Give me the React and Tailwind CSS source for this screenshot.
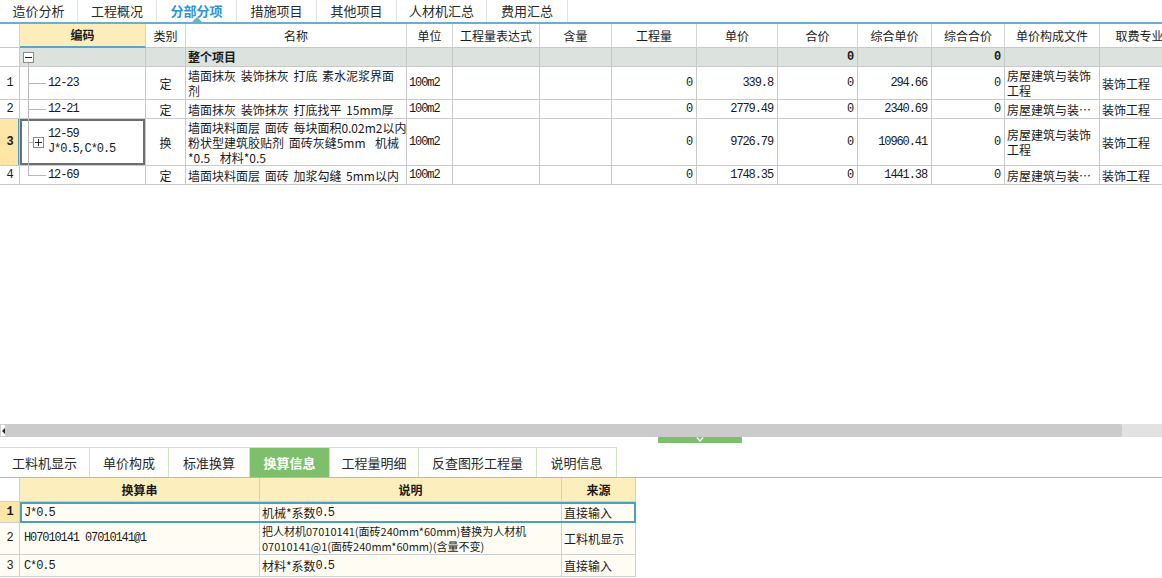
const topTabs = [
  ["造价分析", 78],
  ["工程概况", 79],
  ["分部分项", 80],
  ["措施项目", 80],
  ["其他项目", 80],
  ["人材机汇总", 90],
  ["费用汇总", 81],
];

const bottomTabs = [
  ["工料机显示", 90],
  ["单价构成", 79],
  ["标准换算", 81],
  ["换算信息", 80],
  ["工程量明细", 89],
  ["反查图形工程量", 118],
  ["说明信息", 80],
];

const W = [20, 126, 40, 221, 46, 87, 72, 85, 81, 80, 74, 73, 95, 80];
const heads = ["", "编码", "类别", "名称", "单位", "工程量表达式", "含量", "工程量", "单价", "合价", "综合单价", "综合合价", "单价构成文件", "取费专业"];

const mono = "font-['Liberation_Mono'] text-[12px] tracking-[-1.1px]";
const line = "border-r border-b border-[#c9c9c9]";

const rows = [
  {
    n: "1", code: "12-23", type: "定",
    name: ["墙面抹灰 装饰抹灰 打底 素水泥浆界面", "剂"],
    price: "339.8", cprice: "294.66",
    file: ["房屋建筑与装饰", "工程"], h: "h-[33px]",
  },
  {
    n: "2", code: "12-21", type: "定",
    name: ["墙面抹灰 装饰抹灰 打底找平 15mm厚"],
    price: "2779.49", cprice: "2340.69",
    file: ["房屋建筑与装…"], h: "h-[19px]",
  },
  {
    n: "3", code: "12-59", sub: "J*0.5,C*0.5", type: "换",
    name: ["墙面块料面层 面砖 每块面积0.02m2以内", "粉状型建筑胶贴剂 面砖灰缝5mm  机械", "*0.5  材料*0.5"],
    price: "9726.79", cprice: "10960.41",
    file: ["房屋建筑与装饰", "工程"], h: "h-[47px]", sel: true,
  },
  {
    n: "4", code: "12-69", type: "定",
    name: ["墙面块料面层 面砖 加浆勾缝 5mm以内"],
    price: "1748.35", cprice: "1441.38",
    file: ["房屋建筑与装…"], h: "h-[19px]", last: true,
  },
];

function Box({ plus }) {
  return (
    <div className="w-[11px] h-[11px] border border-[#8a8a8a] bg-white flex items-center justify-center relative">
      <div className="w-[7px] h-px bg-[#222]" />
      {plus && <div className="absolute w-px h-[7px] bg-[#222]" />}
    </div>
  );
}

function Num({ w, children, bold }) {
  return (
    <div className={`${line} shrink-0 flex items-center justify-end pr-[4px] ${mono} ${bold ? "font-bold" : ""}`} style={{ width: w }}>
      {children}
    </div>
  );
}

function Blank({ w }) {
  return <div className={`${line} shrink-0`} style={{ width: w }} />;
}

function DataRow({ r }) {
  return (
    <div className={`flex ${r.h} leading-[15px]`}>
      <div className={`${line} shrink-0 flex items-center justify-center ${mono} ${r.sel ? "bg-[#fde6a6] font-bold shadow-[inset_-1px_0_0_#4a9fc6]" : ""}`} style={{ width: W[0] }}>
        {r.n}
      </div>
      <div className={`${line} shrink-0 relative flex items-center pl-[28px] ${r.sel ? "shadow-[inset_0_0_0_2px_#6e6e6e]" : ""}`} style={{ width: W[1] }}>
        <div className={`absolute left-[8px] top-0 w-px bg-[#b8b8b8] ${r.last ? "h-1/2" : "bottom-0"}`} />
        {r.sub ? (
          <>
            <div className="absolute left-[8px] top-1/2 w-[5px] h-px bg-[#b8b8b8]" />
            <div className="absolute left-[13px] top-[18px]"><Box plus /></div>
          </>
        ) : (
          <div className="absolute left-[8px] top-1/2 w-[18px] h-px bg-[#b8b8b8]" />
        )}
        <div className={mono}>
          <div>{r.code}</div>
          {r.sub && <div>{r.sub}</div>}
        </div>
      </div>
      <div className={`${line} shrink-0 flex items-center justify-center`} style={{ width: W[2] }}>{r.type}</div>
      <div className={`${line} shrink-0 flex flex-col justify-center pl-[2px] whitespace-pre [word-spacing:2px] overflow-hidden`} style={{ width: W[3] }}>
        {r.name.map((t, i) => <div key={i}>{t}</div>)}
      </div>
      <div className={`${line} shrink-0 flex items-center pl-[2px] ${mono}`} style={{ width: W[4] }}>100m2</div>
      <Blank w={W[5]} />
      <Blank w={W[6]} />
      <Num w={W[7]}>0</Num>
      <Num w={W[8]}>{r.price}</Num>
      <Num w={W[9]}>0</Num>
      <Num w={W[10]}>{r.cprice}</Num>
      <Num w={W[11]}>0</Num>
      <div className={`${line} shrink-0 flex flex-col justify-center pl-[2px] whitespace-nowrap`} style={{ width: W[12] }}>
        {r.file.map((t, i) => <div key={i}>{t}</div>)}
      </div>
      <div className={`${line} shrink-0 flex items-center pl-[2px]`} style={{ width: W[13] }}>装饰工程</div>
    </div>
  );
}

export default function App() {
  return (
    <div className="w-[1162px] h-[578px] overflow-hidden bg-white flex flex-col text-[12px] text-[#1a1a1a] font-['Noto_Sans_CJK_SC',sans-serif]">
      {/* top tabs */}
      <div className="flex h-[22px] shrink-0 text-[13px]">
        {topTabs.map(([t, w], i) => (
          <div key={t} className={`relative flex items-center justify-center border-r border-[#e2e2e2] ${i === 2 ? "text-[#2f95d6] font-bold" : "text-[#2a2a2a]"}`} style={{ width: w }}>
            {t}
            {i === 2 && (
              <div className="absolute bottom-0 left-1/2 -ml-[5px] w-0 h-0 border-x-[5px] border-x-transparent border-b-[5px] border-b-[#6ab0cc]" />
            )}
          </div>
        ))}
      </div>
      <div className="h-[2px] shrink-0 bg-[#6ab0cc]" />

      {/* main grid */}
      <div className="h-[400px] shrink-0 overflow-hidden">
        <div className="w-[1180px]">
          <div className="flex h-[24px]">
            {heads.map((h, i) => (
              <div
                key={i}
                className={`shrink-0 flex items-center justify-center border-r border-[#d4d4d4] ${i === 1 ? "bg-[#fdedbb] font-bold border-b-2 border-b-[#5aa5c5]" : "border-b border-b-[#c9c9c9]"}`}
                style={{ width: W[i] }}
              >
                {h}
              </div>
            ))}
          </div>
          <div className="flex h-[19px]">
            <div className={`${line} shrink-0`} style={{ width: W[0] }} />
            <div className={`${line} shrink-0 relative flex items-center pl-[3px] bg-[#dce3df]`} style={{ width: W[1] }}>
              <Box />
              <div className="absolute left-[8px] top-[15px] bottom-0 w-px bg-[#b8b8b8]" />
            </div>
            <div className={`${line} shrink-0 bg-[#dce3df]`} style={{ width: W[2] }} />
            <div className={`${line} shrink-0 bg-[#dce3df] flex items-center pl-[2px] font-bold`} style={{ width: W[3] }}>整个项目</div>
            {W.slice(4).map((w, j) => {
              const i = j + 4;
              const zero = i === 9 || i === 11;
              return (
                <div key={i} className={`${line} shrink-0 bg-[#dce3df] flex items-center justify-end pr-[4px] ${mono} font-bold`} style={{ width: w }}>
                  {zero ? "0" : ""}
                </div>
              );
            })}
          </div>
          {rows.map((r) => <DataRow key={r.n} r={r} />)}
        </div>
      </div>

      {/* horizontal scrollbar */}
      <div className="flex h-[13px] shrink-0 bg-[#e2e2e2]">
        <div className="w-[6px] bg-white border border-[#cfcfcf] flex items-center justify-center">
          <div className="w-0 h-0 border-y-[3px] border-y-transparent border-r-[3px] border-r-[#222]" />
        </div>
        <div className="w-[1116px] bg-[#cbcbcb] rounded-r-[2px]" />
      </div>

      {/* splitter */}
      <div className="flex h-[6px] shrink-0">
        <div className="ml-[658px] w-[84px] bg-[#7dc06c] flex items-start justify-center">
          <svg width="8" height="5" viewBox="0 0 8 5">
            <polyline points="1,0.5 4,4 7,0.5" fill="none" stroke="white" strokeWidth="1.4" />
          </svg>
        </div>
      </div>
      <div className="h-[4px] shrink-0" />

      {/* bottom tabs */}
      <div className="flex h-[30px] shrink-0 text-[13px]">
        <div className="flex border-t border-[#cde6c2]">
          {bottomTabs.map(([t, w], i) => (
            <div
              key={t}
              className={`flex items-center justify-center border-r border-[#cde6c2] ${i === 3 ? "bg-[#7dbf6b] text-white font-bold" : "text-[#2a2a2a]"}`}
              style={{ width: w }}
            >
              {t}
            </div>
          ))}
        </div>
      </div>
      <div className="h-px shrink-0 bg-[#9ccf8a]" />

      {/* bottom table */}
      <div className="w-[636px] flex flex-col">
        <div className="flex h-[24px] font-bold">
          <div className="w-[20px] shrink-0 border-r border-b border-[#d0d0d0] bg-white" />
          <div className="w-[240px] shrink-0 border-r border-b border-[#d0d0d0] bg-[#fdeebe] flex items-center justify-center">换算串</div>
          <div className="w-[302px] shrink-0 border-r border-b border-[#d0d0d0] bg-[#fdeebe] flex items-center justify-center">说明</div>
          <div className="w-[74px] shrink-0 border-r border-b border-[#d0d0d0] bg-[#fdeebe] flex items-center justify-center">来源</div>
        </div>
        <div className="flex h-[21px]">
          <div className={`w-[20px] shrink-0 border-r border-b border-[#d0d0d0] bg-[#fde6a6] flex items-center justify-center font-bold ${mono}`}>1</div>
          <div className="flex border-2 border-[#4a9fc6] bg-[#fffdf3]">
            <div className={`w-[238px] shrink-0 border-r border-[#d0d0d0] flex items-center pl-[2px] ${mono}`}>J*0.5</div>
            <div className="w-[302px] shrink-0 border-r border-[#d0d0d0] flex items-center pl-[2px]">
              <span>机械*系数</span><span className={mono}>0.5</span>
            </div>
            <div className="w-[72px] shrink-0 flex items-center pl-[2px]">直接输入</div>
          </div>
        </div>
        <div className="flex h-[32px] bg-[#fffdf3] leading-[15px]">
          <div className={`w-[20px] shrink-0 border-r border-b border-[#d0d0d0] flex items-center justify-center ${mono}`}>2</div>
          <div className={`w-[240px] shrink-0 border-r border-b border-[#d0d0d0] flex items-center pl-[4px] ${mono} whitespace-pre`}>H07010141 07010141@1</div>
          <div className="w-[302px] shrink-0 border-r border-b border-[#d0d0d0] flex flex-col justify-center pl-[2px] text-[11px] whitespace-nowrap">
            <div>把人材机07010141(面砖240mm*60mm)替换为人材机</div>
            <div>07010141@1(面砖240mm*60mm)(含量不变)</div>
          </div>
          <div className="w-[74px] shrink-0 border-r border-b border-[#d0d0d0] flex items-center pl-[2px]">工料机显示</div>
        </div>
        <div className="flex h-[22px] bg-[#fffdf3]">
          <div className={`w-[20px] shrink-0 border-r border-b border-[#d0d0d0] flex items-center justify-center ${mono}`}>3</div>
          <div className={`w-[240px] shrink-0 border-r border-b border-[#d0d0d0] flex items-center pl-[4px] ${mono}`}>C*0.5</div>
          <div className="w-[302px] shrink-0 border-r border-b border-[#d0d0d0] flex items-center pl-[2px]">
            <span>材料*系数</span><span className={mono}>0.5</span>
          </div>
          <div className="w-[74px] shrink-0 border-r border-b border-[#d0d0d0] flex items-center pl-[2px]">直接输入</div>
        </div>
      </div>
    </div>
  );
}
